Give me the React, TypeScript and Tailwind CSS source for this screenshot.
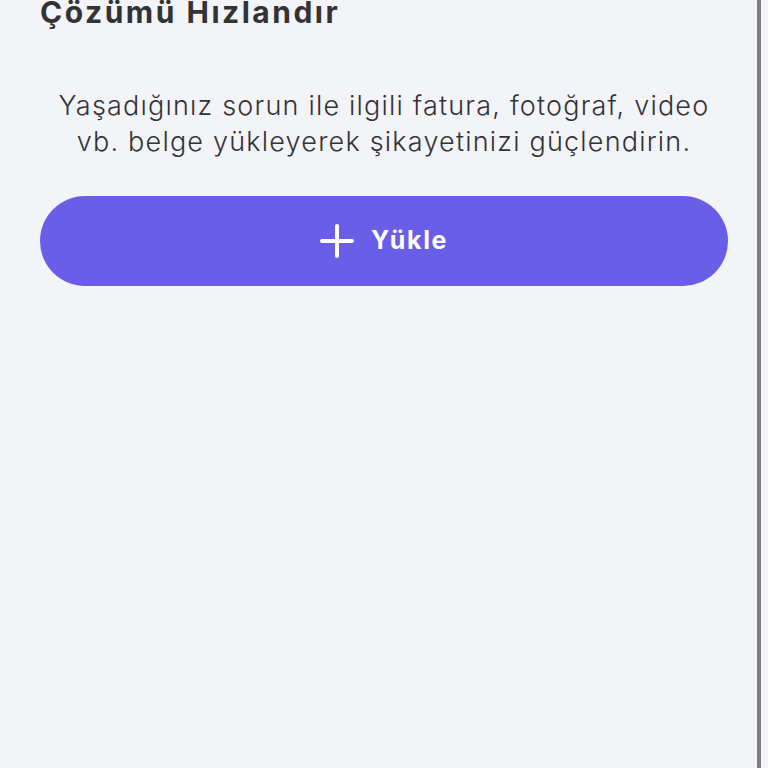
export default function App() {
  return (
    <div
      className="relative min-h-[768px] w-full overflow-hidden bg-[#f3f4f8] px-10"
      style={{ fontFamily: 'Inter, "Noto Sans", sans-serif' }}
    >
      {/* Başlık */}
      <h2 className="-mt-[6px] text-[30px] font-bold leading-[36px] tracking-[2.5px] text-[#333336]">
        Çözümü Hızlandır
      </h2>

      <p className="mx-auto mt-[58px] max-w-[676px] text-center text-[27px] font-light leading-[36px] tracking-[1.2px] text-[#333336]">
        Yaşadığınız sorun ile ilgili fatura, fotoğraf, video vb. belge yükleyerek şikayetinizi güçlendirin.
      </p>

      <button className="mt-[36px] flex h-[90px] w-full items-center justify-center gap-[17px] rounded-full bg-[#6a5de8] text-white">
        <svg width="34" height="34" viewBox="0 0 34 34" fill="none" stroke="currentColor" strokeWidth="4" strokeLinecap="round">
          <line x1="17" y1="2" x2="17" y2="32" />
          <line x1="2" y1="17" x2="32" y2="17" />
        </svg>
        <span className="text-[25px] font-bold tracking-[1.6px]">Yükle</span>
      </button>

      {/* kaydırma çizgisi */}
      <div className="absolute right-[7px] top-0 h-full w-[4px] bg-[#808080]" />
    </div>
  );
}
